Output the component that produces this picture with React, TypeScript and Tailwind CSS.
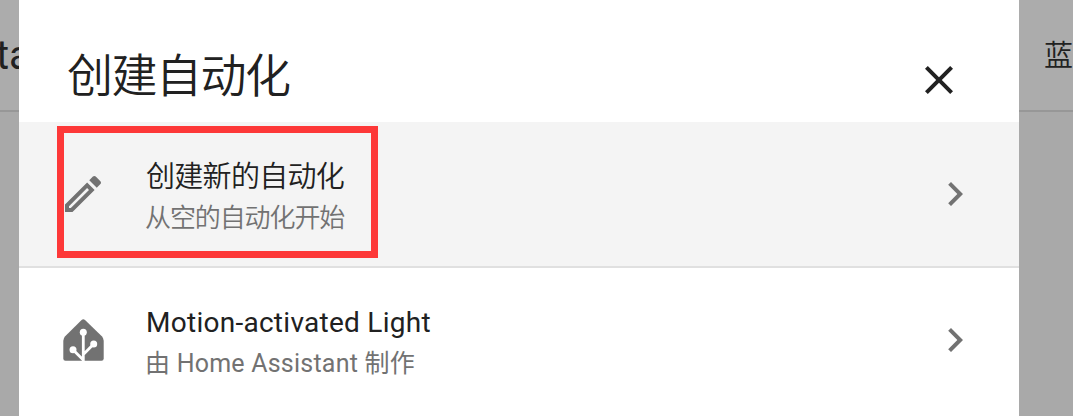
import type { ReactNode } from "react";

function Icon({ d }: { d: string }) {
  return (
    <svg viewBox="0 0 24 24" className="block size-12 shrink-0 fill-current">
      <path d={d} />
    </svg>
  );
}

const CLOSE =
  "M19,6.41L17.59,5L12,10.59L6.41,5L5,6.41L10.59,12L5,17.59L6.41,19L12,13.41L17.59,19L19,17.59L13.41,12L19,6.41Z";
const CHEVRON = "M8.59,16.58L13.17,12L8.59,7.41L10,6L16,12L10,18L8.59,16.58Z";
const PENCIL =
  "M14.06,9L15,9.94L5.92,19H5V18.08L14.06,9M17.66,3C17.41,3 17.15,3.1 16.96,3.29L15.13,5.12L18.88,8.87L20.71,7.04C21.1,6.65 21.1,6 20.71,5.63L18.37,3.29C18.17,3.09 17.92,3 17.66,3M14.06,6.19L3,17.25V21H6.75L17.81,9.94L14.06,6.19Z";

function HomeAssistantIcon() {
  return (
    <svg viewBox="0 0 48 48" className="block size-12 shrink-0">
      <path
        className="fill-current"
        d="M22.6 4 Q24.3 2.5 26 4 L42.8 20.2 Q44.7 22.2 44.7 24.8 V42.5 Q44.7 44.7 42.5 44.7 H6.5 Q4.3 44.7 4.3 42.5 V24.8 Q4.3 22.2 6.2 20.2 Z"
      />
      <path d="M24.3 16V45M14 33.7L24.3 44M34.7 28L24.3 38.4" className="fill-none stroke-white" strokeWidth="2.8" />
      <g className="fill-white">
        <circle cx="24.3" cy="16.3" r="3.5" />
        <circle cx="14" cy="33.7" r="3.5" />
        <circle cx="34.7" cy="28" r="3.5" />
      </g>
    </svg>
  );
}

function Row({ icon, children, className }: { icon: ReactNode; children: ReactNode; className: string }) {
  return (
    <div className={`flex h-36 shrink-0 items-center pr-10 pl-10 text-[#727272] ${className}`}>
      {icon}
      <div className="ml-[39px] flex flex-1 flex-col pt-[7px] whitespace-nowrap">{children}</div>
      <Icon d={CHEVRON} />
    </div>
  );
}

export default function App() {
  return (
    <div className="flex h-[416px] w-[1073px] overflow-hidden bg-[#a9a9a9] font-['Roboto','Noto_Sans_CJK_SC',sans-serif] text-[#212121]">
      <div className="h-28 w-[19px] shrink-0 overflow-hidden border-b-2 border-[#979797] bg-[#acacac]">
        <div className="-ml-1 pt-8 text-[40px] leading-[48px]">ta</div>
      </div>
      <main className="flex w-[1000px] shrink-0 flex-col overflow-hidden bg-white">
        <header className="flex h-[122px] shrink-0 items-center justify-between pr-14 pl-12">
          <h1 className="pt-[30px] text-[46px] leading-[60px] font-[350] tracking-[-1.5px]">创建自动化</h1>
          <div className="pt-[38px]">
            <Icon d={CLOSE} />
          </div>
        </header>
        <div className="relative shrink-0 border-b-2 border-[#e0e0e0]">
          <Row className="bg-[#f4f4f4]" icon={<Icon d={PENCIL} />}>
            <div className="text-[29px] leading-10 font-[350] tracking-[-0.7px] text-[#212121]">创建新的自动化</div>
            <div className="-ml-px text-[26px] leading-[42px] font-[350] tracking-[-1.1px]">从空的自动化开始</div>
          </Row>
          <div className="absolute top-1 left-[38px] h-[132px] w-[321px] border-[7px] border-[#fd3838]" />
        </div>
        <Row className="bg-white" icon={<HomeAssistantIcon />}>
          <div className="text-[28px] leading-10 tracking-[0.27px] text-[#212121]">Motion-activated Light</div>
          <div className="-ml-px text-[25px] leading-[42px] tracking-[0.22px]">由 Home Assistant 制作</div>
        </Row>
      </main>
      <div className="h-28 w-[54px] shrink-0 overflow-hidden border-b-2 border-[#979797] bg-[#acacac]">
        <div className="pt-9 pl-[25px] text-[29px] leading-10 font-[350] whitespace-nowrap">蓝</div>
      </div>
    </div>
  );
}
